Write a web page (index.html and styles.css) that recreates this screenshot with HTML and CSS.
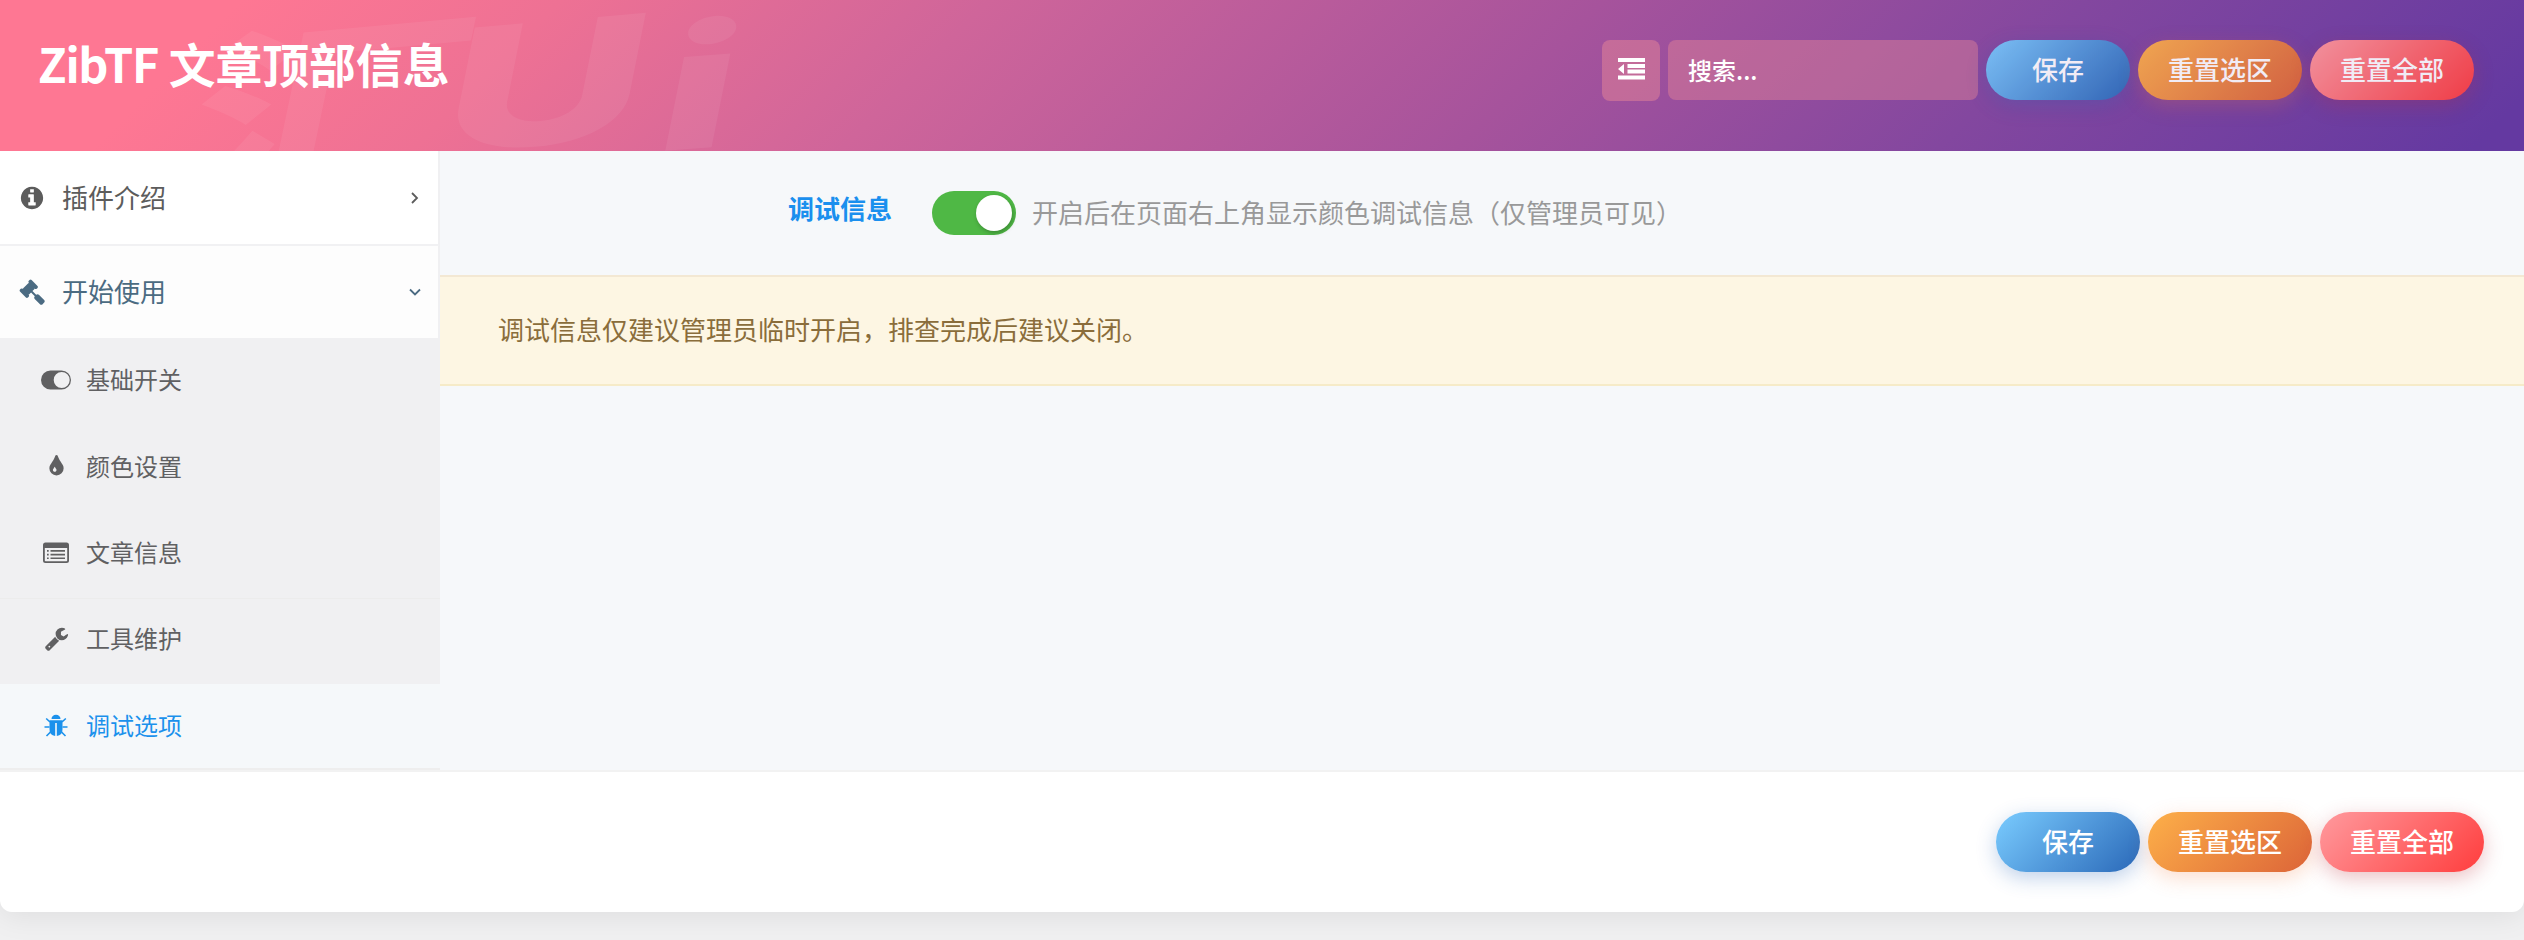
FILE: index.html
```html
<!DOCTYPE html>
<html lang="zh-CN">
<head>
    <meta charset="UTF-8">
    <meta name="viewport" content="width=device-width, initial-scale=1.0">
    <title>ZibTF 文章顶部信息</title>
    <link rel="stylesheet" href="styles.css">
</head>
<body>

<div class="options">
    <header class="header">
        <svg class="watermark" width="800" height="151" aria-hidden="true">
            <text class="mark-cjk" transform="matrix(1.42 -0.13 -0.21 1 174 200)">汇</text>
            <text class="mark-latin" transform="matrix(1.62 -0.14 -0.2 1 434 154)">U</text>
            <text class="mark-latin" transform="matrix(1.58 -0.12 -0.2 1 650 152)">i</text>
        </svg>
        <h1><span class="latin">ZibTF</span> 文章顶部信息</h1>
        <div class="header-tools">
            <button type="button" class="expand">
                <svg width="27" height="22" viewBox="0 0 27 22">
                    <path d="M0 0h27v4H0zM9.500 6H27v4H9.500zM9.500 11.500H27v4H9.500zM0 17.500h27v4H0zM6 6v10L0 11z"/>
                </svg>
            </button>
            <input type="text" class="search" placeholder="搜索...">
            <button type="button" class="btn save">保存</button>
            <button type="button" class="btn reset-section">重置选区</button>
            <button type="button" class="btn reset-all">重置全部</button>
        </div>
    </header>

    <div class="wrapper">
        <nav class="nav">
            <a class="nav-item">
                <svg class="icon" viewBox="0 0 1792 1792"><path d="M1152 1376v-160q0-14-9-23t-23-9h-96v-512q0-14-9-23t-23-9h-320q-14 0-23 9t-9 23v160q0 14 9 23t23 9h96v320h-96q-14 0-23 9t-9 23v160q0 14 9 23t23 9h448q14 0 23-9t9-23zm-128-896v-160q0-14-9-23t-23-9h-192q-14 0-23 9t-9 23v160q0 14 9 23t23 9h192q14 0 23-9t9-23zm640 416q0 209-103 385.500t-279.500 279.500-385.500 103-385.500-103-279.500-279.500-103-385.500 103-385.500 279.500-279.500 385.500-103 385.500 103 279.500 279.500 103 385.500z"/></svg>
                <span>插件介绍</span>
                <svg class="arrow" width="12" height="12" viewBox="0 0 12 12"><path d="M3 1l5 5-5 5"/></svg>
            </a>
            <a class="nav-item open">
                <svg class="icon" viewBox="0 0 1792 1792"><path d="M1771 1536q0 53-37 90l-107 108q-39 37-91 37-53 0-90-37l-363-364q-38-36-38-90 0-53 43-96l-256-256-126 126q-14 14-34 14t-34-14q2 2 12.500 12t12.500 13 10 11.500 10 13.500 6 13.500 5.500 16.500 1.500 18q0 38-28 68-3 3-16.500 18t-19 20.500-18.500 16.500-22 15.500-22 9-26 4.500q-40 0-68-28l-408-408q-28-28-28-68 0-13 4.500-26t9-22 15.500-22 16.500-18.500 20.500-19 18-16.500q30-28 68-28 10 0 18 1.500t16.500 5.500 13.500 6 13.500 10 11.500 10 13 12.500 12 12.500q-14-14-14-34t14-34l348-348q14-14 34-14t34 14q-2-2-12.500-12t-12.500-13-10-11.500-10-13.500-6-13.500-5.500-16.500-1.500-18q0-38 28-68 3-3 16.500-18t19-20.500 18.500-16.500 22-15.500 22-9 26-4.500q40 0 68 28l408 408q28 28 28 68 0 13-4.500 26t-9 22-15.500 22-16.500 18.500-20.500 19-18 16.500q-30 28-68 28-10 0-18-1.500t-16.500-5.500-13.500-6-13.500-10-11.500-10-13-12.500-12-12.500q14 14 14 34t-14 34l-126 126 256 256q43-43 96-43 52 0 91 37l363 363q37 39 37 91z"/></svg>
                <span>开始使用</span>
                <svg class="arrow" width="12" height="12" viewBox="0 0 12 12"><path d="M1 3.500l5 5 5-5"/></svg>
            </a>
            <div class="sub-nav">
                <a class="sub-item">
                    <svg width="30" height="20" viewBox="0 0 30 20"><path fill-rule="evenodd" d="M9.500 .5h11a9.500 9.500 0 0 1 0 19h-11a9.500 9.500 0 0 1 0-19zM20.700 2a8 8 0 1 0 0 16a8 8 0 0 0 0-16z"/></svg>
                    <span>基础开关</span>
                </a>
                <a class="sub-item">
                    <svg width="25" height="25" viewBox="0 0 1792 1792"><path d="M896 1152q0-36-20-69-1-1-15.500-22.500t-25.500-38-25-44-21-50.500q-4-16-21-16t-21 16q-7 23-21 50.500t-25 44-25.500 38-15.500 22.500q-20 33-20 69 0 53 37.500 90.500t90.500 37.500 90.500-37.500 37.500-90.500zm512-128q0 212-150 362t-362 150-362-150-150-362q0-145 81-275 6-9 62.500-90.500t101-151 99.500-178 83-201.500q9-30 34-47t51-17 51.500 17 33.500 47q28 93 83 201.500t99.500 178 101 151 62.500 90.500q81 127 81 275z"/></svg>
                    <span>颜色设置</span>
                </a>
                <a class="sub-item">
                    <svg width="26" height="22" viewBox="0 0 26 22"><path fill-rule="evenodd" d="M2.500 .5h21A2.500 2.500 0 0 1 26 3v15.500a2.500 2.500 0 0 1-2.500 2.500h-21A2.500 2.500 0 0 1 0 18.500V3A2.500 2.500 0 0 1 2.500 .5zM1.800 6v12.500q0 .8.800 .8h20.800q.8 0 .8-.8V6z"/><path d="M4 8h1.700v1.700H4zM4 11.700h1.700v1.700H4zM4 15.400h1.700v1.700H4zM7.500 8H22v1.700H7.500zM7.500 11.700H22v1.700H7.500zM7.500 15.400H22v1.700H7.500z"/></svg>
                    <span>文章信息</span>
                </a>
                <a class="sub-item divided">
                    <svg width="25" height="25" viewBox="0 0 1792 1792"><path d="M448 1472q0-26-19-45t-45-19-45 19-19 45 19 45 45 19 45-19 19-45zm644-420l-682 682q-37 37-90 37-52 0-91-37l-106-108q-38-36-38-90 0-53 38-91l681-681q39 98 114.500 173.500t173.500 114.500zm634-435q0 39-23 106-47 134-164.500 217.500t-258.500 83.500q-185 0-316.500-131.500t-131.500-316.500 131.500-316.500 316.500-131.500q58 0 121.500 16.500t107.500 46.500q16 11 16 28t-16 28l-293 169v224l193 107q5-3 79-48.500t135.500-81 70.500-35.500q15 0 23.500 10t8.500 25z"/></svg>
                    <span>工具维护</span>
                </a>
                <a class="sub-item active">
                    <svg width="24" height="24" viewBox="0 0 24 24">
                        <path d="M7.500 5a4.500 4.200 0 0 1 9 0z"/>
                        <path d="M5.500 6.300h13v9q0 6.200-5.700 6.700V9h-1.600v13q-5.700-.5-5.700-6.700z"/>
                        <path class="legs" d="M6 8L2.200 4.500M18 8l3.800-3.500M5.500 13H.5M18.500 13h5M6.500 18l-4 4M17.500 18l4 4"/>
                    </svg>
                    <span>调试选项</span>
                </a>
            </div>
        </nav>

        <main class="content">
            <div class="field">
                <label class="field-title">调试信息</label>
                <span class="switcher"><span class="knob"></span></span>
                <span class="field-desc">开启后在页面右上角显示颜色调试信息（仅管理员可见）</span>
            </div>
            <div class="notice">调试信息仅建议管理员临时开启，排查完成后建议关闭。</div>
        </main>
    </div>

    <footer class="footer">
        <button type="button" class="btn save">保存</button>
        <button type="button" class="btn reset-section">重置选区</button>
        <button type="button" class="btn reset-all">重置全部</button>
    </footer>
</div>

</body>
</html>
```
FILE: styles.css
```css
* {
    margin: 0;
    padding: 0;
    box-sizing: border-box;
}
body {
    font-family: 'Noto Sans CJK SC', sans-serif;
    font-size: 26px;
    background-color: #f0f0f1;
    color: #5c5c5c;
    height: 940px;
    overflow: hidden;
}
button, input {
    font-family: inherit;
    border: none;
    outline: none;
}
svg {
    display: block;
    fill: currentColor;
}
.options {
    height: 912px;
    background-color: #fff;
    border-radius: 0 0 12px 12px;
    box-shadow: 0 4px 30px rgba(0, 0, 0, 0.08);
}

/* header */
.header {
    position: relative;
    display: flex;
    justify-content: space-between;
    height: 151px;
    padding: 40px 50px 0 38px;
    overflow: hidden;
    background: linear-gradient(135deg, #fe7793 9%, #ee7194 21%, #cf659a 37%, #a6539c 60%, #83479f 78%, #6439a1 98%);
}
.header h1 {
    position: relative;
    margin-top: -11px;
    font-size: 46.8px;
    font-weight: 700;
    line-height: 68px;
    color: #fff;
}
.latin {
    letter-spacing: -1.3px;
}
.watermark {
    position: absolute;
    left: 0;
    top: 0;
    fill: #fff;
    opacity: 0.06;
}
.mark-cjk {
    font: 700 200px 'Noto Sans CJK SC', sans-serif;
}
.mark-latin {
    font: 800 172px Inter, sans-serif;
}
.header-tools {
    position: relative;
    display: flex;
    align-items: flex-start;
    gap: 8px;
}
.expand {
    display: flex;
    align-items: center;
    justify-content: center;
    width: 58px;
    height: 61px;
    padding-bottom: 3px;
    border-radius: 8px;
    background-color: rgba(240, 140, 150, 0.45);
    color: #fff;
}
.search {
    width: 310px;
    height: 60px;
    padding: 0 20px 2px;
    border-radius: 8px;
    background-color: rgba(240, 140, 150, 0.4);
    font-size: 24px;
    font-weight: 500;
    color: #fff;
}
.search::placeholder {
    color: #fff;
}
.btn {
    width: 164px;
    height: 60px;
    padding-bottom: 3px;
    border-radius: 30px;
    font-size: 26px;
    font-weight: 500;
    color: #fff;
    cursor: pointer;
}
.header .btn {
    opacity: 0.9;
}
.save {
    width: 144px;
    background: linear-gradient(135deg, #7accff, #2a68b8);
    box-shadow: 0 6px 20px rgba(42, 104, 184, 0.3);
}
.reset-section {
    background: linear-gradient(135deg, #fdb049, #dc6438);
    box-shadow: 0 6px 20px rgba(245, 120, 60, 0.25);
}
.reset-all {
    background: linear-gradient(135deg, #ff9a9e, #ff3d3d);
    box-shadow: 0 6px 20px rgba(190, 50, 60, 0.3);
}

/* sidebar */
.wrapper {
    display: flex;
    height: 619px;
}
.nav {
    width: 440px;
    background-color: #f0f0f2;
    border-bottom: 2px solid #eee;
}
.nav-item {
    display: flex;
    align-items: center;
    height: 95px;
    padding: 0 17px 0 19px;
    border-right: 2px solid #f0f0f2;
    border-bottom: 2px solid #f1f1f3;
    background-color: #fff;
}
.nav-item span {
    margin-top: -3px;
}
.nav-item.open {
    height: 92px;
    border-bottom: none;
    background-color: #fdfdfd;
    color: #4b6b82;
}
.icon {
    width: 26px;
    height: 26px;
    margin-right: 17px;
}
.arrow {
    margin-left: auto;
    fill: none;
    stroke: currentColor;
    stroke-width: 1.8;
}
.sub-item {
    display: flex;
    align-items: center;
    height: 86.5px;
    padding: 0 0 3px 26px;
    font-size: 24px;
    color: #606062;
}
.sub-item svg {
    margin: 0 auto;
}
.sub-item span {
    width: 354px;
    margin-top: -2px;
}
.sub-item.divided {
    padding-bottom: 5px;
    border-top: 1px solid #ececec;
}
.sub-item.active {
    height: 84px;
    padding-bottom: 1px;
    background-color: #f5f8fa;
    color: #1b91ec;
}
.legs {
    fill: none;
    stroke: currentColor;
    stroke-width: 1.6;
}

/* content */
.content {
    flex: 1;
    background-color: #f6f8fa;
}
.field {
    display: flex;
    align-items: center;
    height: 124px;
    padding-left: 348px;
}
.field-title {
    width: 144px;
    margin-top: -11px;
    font-weight: 700;
    color: #1a8fee;
}
.switcher {
    width: 84px;
    height: 44px;
    margin-right: 16px;
    padding: 4px;
    border-radius: 22px;
    background-color: #4fb845;
}
.knob {
    display: block;
    width: 36px;
    height: 36px;
    margin-left: auto;
    border-radius: 50%;
    background-color: #fff;
    box-shadow: 1px 2px 4px rgba(0, 0, 0, 0.25);
}
.field-desc {
    margin-top: -3px;
    color: #999;
}
.notice {
    height: 111px;
    padding-left: 58px;
    border-top: 2px solid #f3e8d3;
    border-bottom: 2px solid #f6ebc8;
    background-color: #fdf6e3;
    line-height: 104px;
    color: #8a6d3b;
}

/* footer */
.footer {
    display: flex;
    justify-content: flex-end;
    gap: 8px;
    padding: 40px 40px 0 0;
    border-top: 2px solid #f2f2f2;
}
```
